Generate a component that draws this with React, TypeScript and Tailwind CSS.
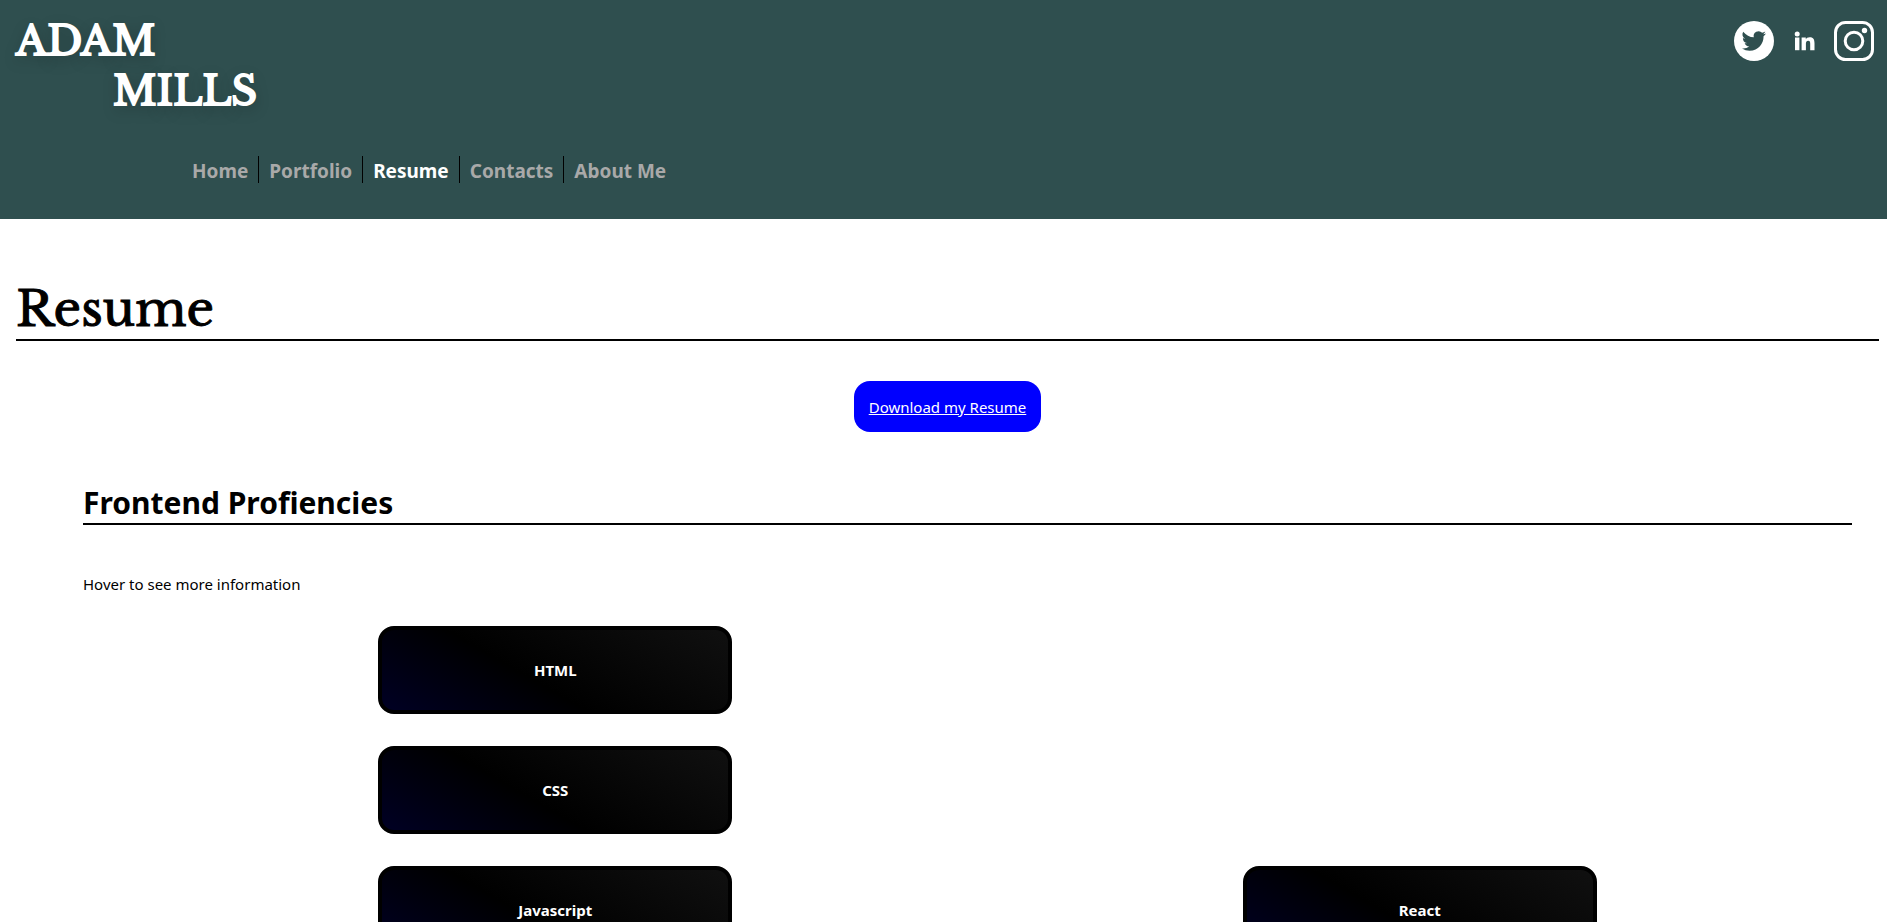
import React from "react";

const navItems = ["Home", "Portfolio", "Resume", "Contacts", "About Me"];

type Skill = { name: string; place: string };

const skills: Skill[] = [
  { name: "HTML", place: "col-start-1 row-start-1" },
  { name: "CSS", place: "col-start-1 row-start-2" },
  { name: "Javascript", place: "col-start-1 row-start-3" },
  { name: "React", place: "col-start-2 row-start-3" },
];

function TwitterIcon() {
  return (
    <svg viewBox="0 0 40 40" className="size-10" aria-hidden="true">
      <circle cx="20" cy="20" r="20" fill="#fff" />
      <path
        transform="translate(8 8)"
        fill="#2f4f4f"
        d="M23.950 4.570a10 10 0 0 1-2.820.770 4.960 4.960 0 0 0 2.160-2.720c-.950.550-2 .950-3.130 1.180a4.920 4.920 0 0 0-8.380 4.480C7.690 8.100 4.070 6.130 1.200 2.660a4.920 4.920 0 0 0 1.960 7.070 4.900 4.900 0 0 1-2.230-.610v.060a4.920 4.920 0 0 0 3.950 4.830 5 5 0 0 1-2.210.080 4.940 4.940 0 0 0 4.600 3.420A9.870 9.870 0 0 1 0 19.540a14 14 0 0 0 7.550 2.210c9.050 0 14-7.500 14-13.990 0-.210 0-.420-.020-.630a9.940 9.940 0 0 0 2.460-2.550z"
      />
    </svg>
  );
}

function LinkedinIcon() {
  return (
    <svg viewBox="0 0 40 40" className="size-10" fill="#fff" aria-hidden="true">
      <circle cx="13.200" cy="13" r="2.500" />
      <path d="M11 16.500h4.400V29.200H11z" />
      <path d="M17.600 16.500h4.200v1.800c.6-1.200 1.900-2.100 3.900-2.100 4 0 4.800 2.600 4.800 6v7h-4.300v-6.200c0-1.500-.1-3.200-2-3.200s-2.300 1.500-2.300 3.100v6.300h-4.300z" />
    </svg>
  );
}

function InstagramIcon() {
  return (
    <svg viewBox="0 0 40 40" className="size-10" fill="none" stroke="#fff" strokeWidth="3" aria-hidden="true">
      <rect x="1.500" y="1.500" width="37" height="37" rx="10" />
      <circle cx="20" cy="20" r="8.800" />
      <circle cx="30.500" cy="9.500" r="2.700" fill="#fff" stroke="none" />
    </svg>
  );
}

const socials = [
  { label: "Twitter", Icon: TwitterIcon },
  { label: "LinkedIn", Icon: LinkedinIcon },
  { label: "Instagram", Icon: InstagramIcon },
];

export default function App() {
  return (
    <div className="h-screen overflow-hidden bg-white font-['Segoe_UI','Noto_Sans',sans-serif] text-black">
      <header className="bg-[#2f4f4f] pb-9">
        <div className="flex items-start justify-between pt-4 pr-[13px] pl-4">
          <div className="font-['Libre_Baskerville','Liberation_Serif',serif] text-[40px] leading-[50px] font-normal text-white [-webkit-text-stroke:2px_currentColor] [text-shadow:0_5px_15px_rgba(0,0,0,0.3)]">
            <div>ADAM</div>
            <div className="pl-[97px]">MILLS</div>
          </div>
          <div className="flex gap-[10px] pt-[5px]">
            {socials.map(({ label, Icon }) => (
              <a key={label} href="#" aria-label={label}>
                <Icon />
              </a>
            ))}
          </div>
        </div>
        <nav className="mt-10 pl-[182px]">
          <ul className="flex text-[19px] leading-[27px] font-bold">
            {navItems.map((item) => (
              <li key={item} className="h-[27px] border-r border-black px-[10px] pt-[2px] last:border-r-0">
                <a
                  href="#"
                  aria-current={item === "Resume" ? "page" : undefined}
                  className={item === "Resume" ? "text-white" : "text-[#a9a9a9]"}
                >
                  {item}
                </a>
              </li>
            ))}
          </ul>
        </nav>
      </header>

      <main className="pt-[60px] pr-2 pl-4">
        <h1 className="border-b-2 border-black font-['Libre_Baskerville','Liberation_Serif',serif] text-5xl leading-[60px] font-normal [-webkit-text-stroke:1px_currentColor]">
          Resume
        </h1>
        <div className="mt-10 flex justify-center">
          <a
            href="#"
            className="rounded-2xl bg-[#0000ff] px-[15px] pt-4 pb-[14px] text-[15px] leading-[21px] text-white underline"
          >
            Download my Resume
          </a>
        </div>
        <section className="mt-12 mr-[27px] ml-[67px]">
          <h2 className="border-b-2 border-black pt-[2px] text-[30px] leading-[41px] font-bold">
            Frontend Profiencies
          </h2>
          <p className="mt-[47px] text-[15px] leading-6">Hover to see more information</p>
          <ul className="mt-[30px] ml-10 grid grid-cols-2 gap-y-8">
            {skills.map(({ name, place }) => (
              <li
                key={name}
                className={`${place} flex h-[88px] w-[41%] items-center justify-center justify-self-center rounded-2xl border-4 border-black bg-[linear-gradient(30deg,#000024,#000000_42%,#101010)] text-[15px] font-bold text-white`}
              >
                {name}
              </li>
            ))}
          </ul>
        </section>
      </main>
    </div>
  );
}
